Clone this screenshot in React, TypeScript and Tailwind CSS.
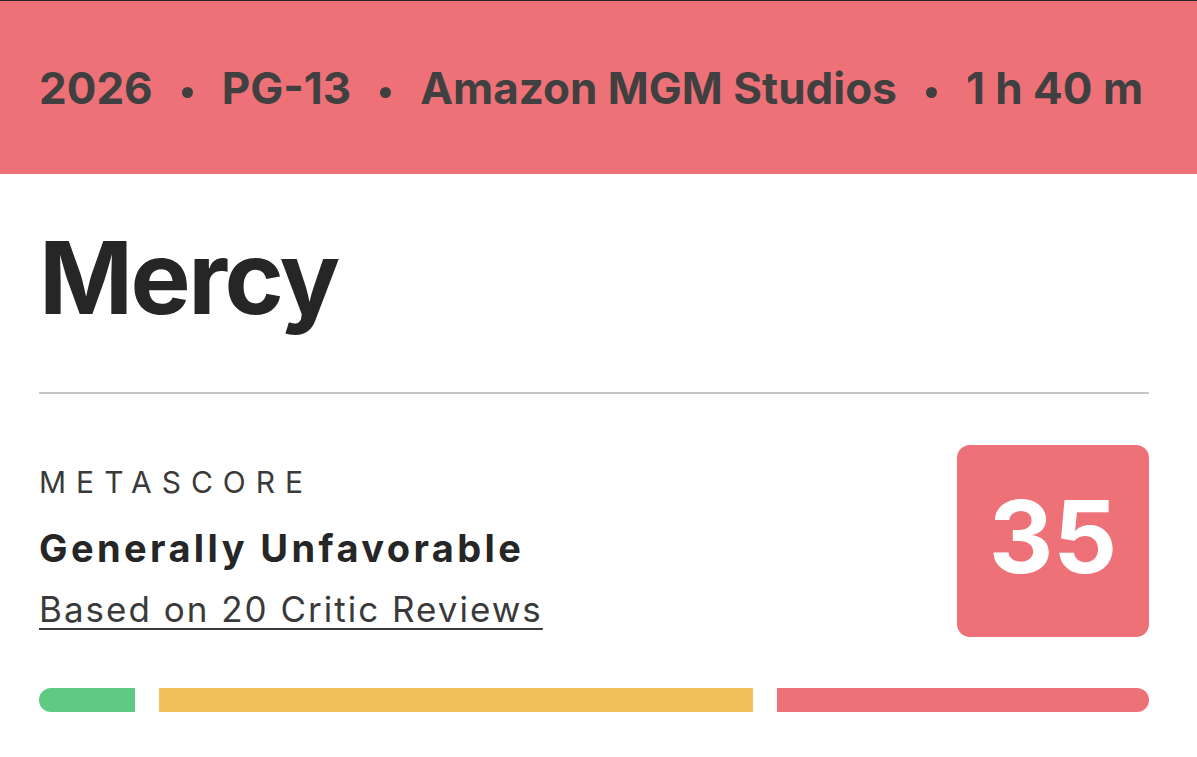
const Dot = () => (
  <span className="mx-[29px] inline-block h-[11px] w-[11px] translate-y-[5px] rounded-full bg-[#404040]" />
);

export default function App() {
  return (
    <div className="min-h-[757px] w-full bg-white font-['Inter',sans-serif]">
      <div className="flex h-[174px] items-center border-t border-[#2a2424] bg-[#ee7178] pl-[39px]">
        <div className="flex items-center text-[44px] font-bold leading-none text-[#404040]">
          <span>2026</span>
          <Dot />
          <span>PG-13</span>
          <Dot />
          <span>Amazon MGM Studios</span>
          <Dot />
          <span>1 h 40 m</span>
        </div>
      </div>

      <div className="pl-[39px] pr-[48px]">
        <h1 className="mt-[53px] text-[101px] font-bold leading-none tracking-[-2.5px] text-[#262626]">
          Mercy
        </h1>

        <div className="mt-[64px] h-[2px] w-full bg-[#c6c6c6]" />

        <div className="mt-[51px] flex items-start justify-between">
          <div className="pt-[22px]">
            <div className="text-[30px] uppercase leading-none tracking-[10px] text-[#3a3a3a]">
              Metascore
            </div>
            <div className="mt-[32px] text-[38px] font-bold leading-none tracking-[3.4px] text-[#262626]">
              Generally Unfavorable
            </div>
            <a className="mt-[25px] block text-[35px] leading-none tracking-[2px] text-[#3a3a3a] underline decoration-2 underline-offset-[6px]">
              Based on 20 Critic Reviews
            </a>
          </div>
          <div className="flex h-[192px] w-[192px] items-center justify-center rounded-[13px] bg-[#ee7178] pb-[8px]">
            <span className="text-[100px] font-bold leading-none text-white">35</span>
          </div>
        </div>

        <div className="mt-[51px] flex h-[24px] gap-[24px]">
          <div className="w-[96px] rounded-l-full bg-[#5fca82]" />
          <div className="w-[594px] bg-[#f3bf5b]" />
          <div className="flex-1 rounded-r-full bg-[#ee7178]" />
        </div>
      </div>
    </div>
  );
}
